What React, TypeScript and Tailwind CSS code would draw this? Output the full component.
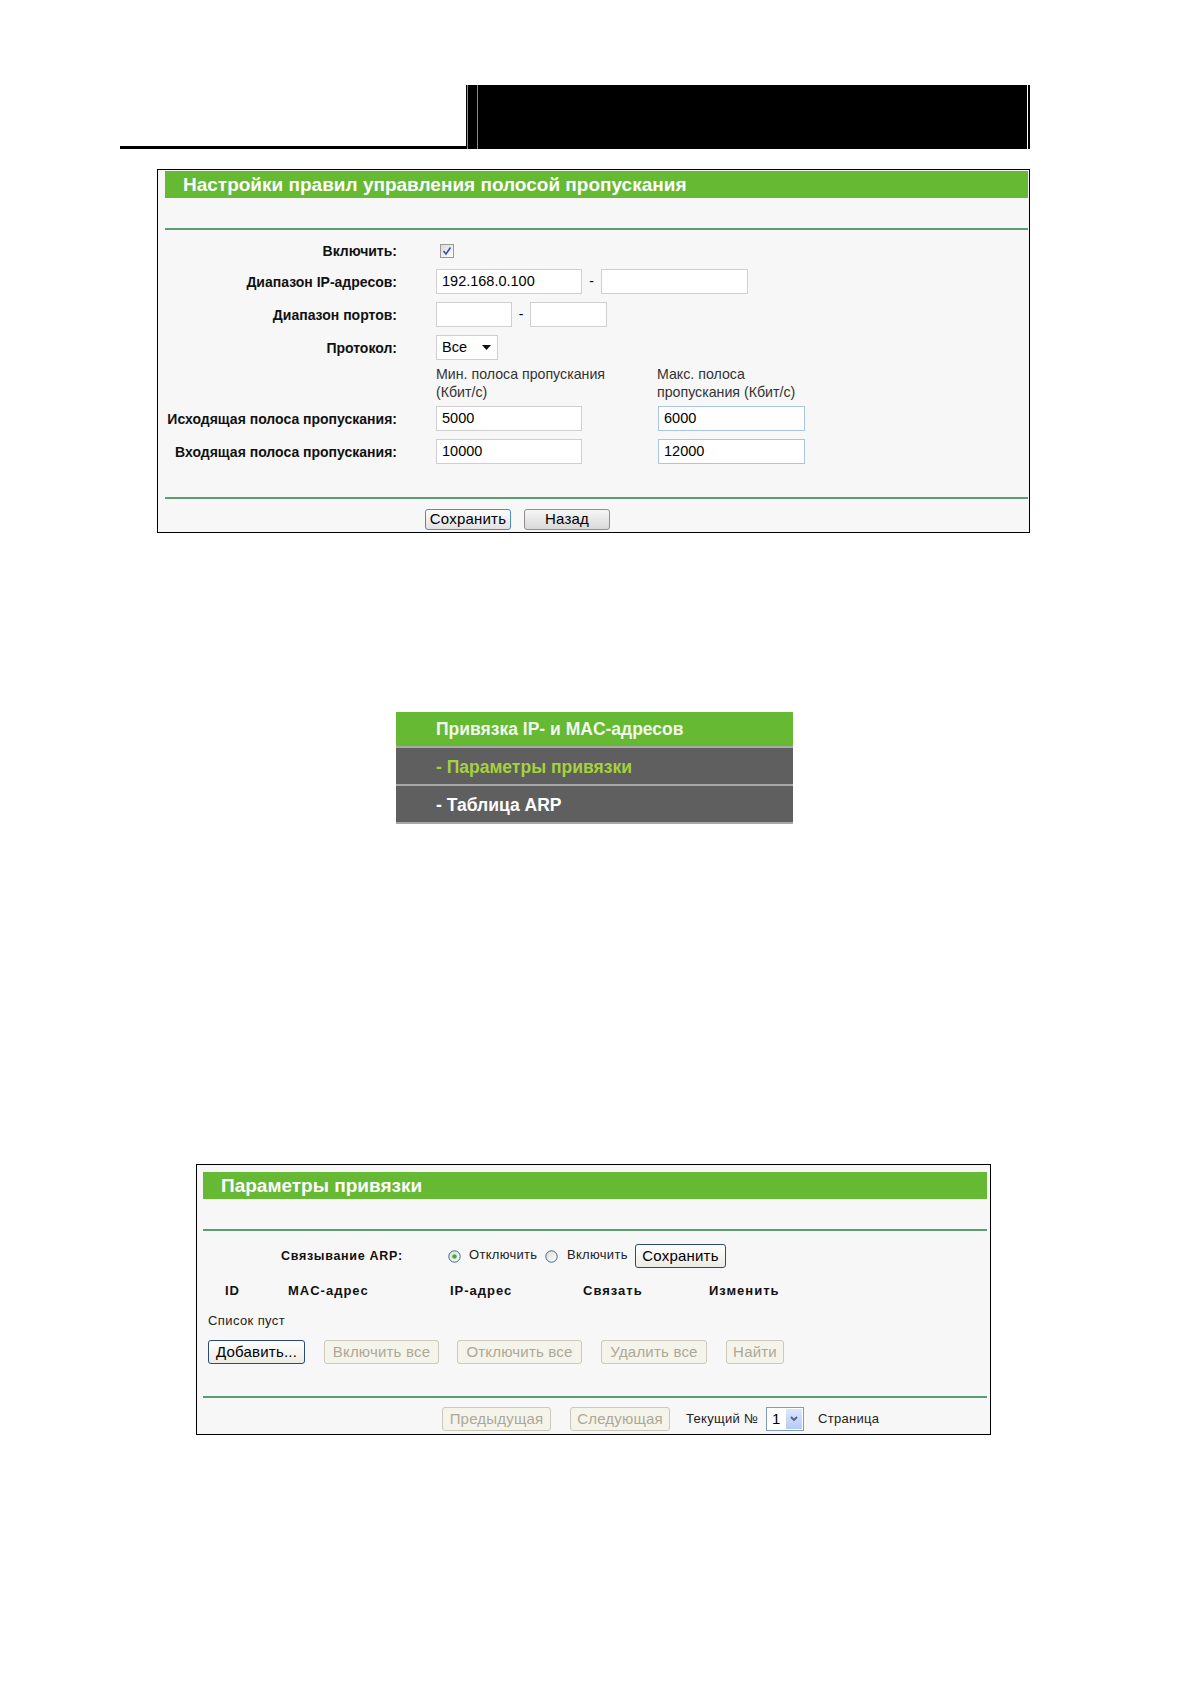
import React from "react";

const F = "font-['Liberation_Sans',Arial,sans-serif]";

function Label({ children }: { children: React.ReactNode }) {
  return (
    <div className="w-[232px] shrink-0 text-right font-bold text-[14px] leading-[20px] text-[#111]">
      {children}
    </div>
  );
}

function TextBox({
  w,
  value,
  blue,
}: {
  w: string;
  value?: string;
  blue?: boolean;
}) {
  return (
    <div
      className={
        "h-[25px] bg-white border pl-[5px] text-[14.5px] leading-[23px] text-black " +
        w +
        (blue ? " border-[#a9c6e6]" : " border-[#cfcfcf]")
      }
    >
      {value}
    </div>
  );
}

function Checkbox() {
  return (
    <svg width="14" height="14" viewBox="0 0 14 14">
      <defs>
        <linearGradient id="cbg" x1="0" y1="0" x2="1" y2="1">
          <stop offset="0" stopColor="#d8d8d8" />
          <stop offset="1" stopColor="#ffffff" />
        </linearGradient>
      </defs>
      <rect x="0.5" y="0.5" width="13" height="13" fill="url(#cbg)" stroke="#9a9a9a" />
      <path d="M3.5 7 L6 10 L10.5 3.5" fill="none" stroke="#3a4fa8" strokeWidth="1.6" />
    </svg>
  );
}

function Radio({ checked }: { checked?: boolean }) {
  return (
    <svg width="13" height="13" viewBox="0 0 13 13">
      <defs>
        <linearGradient id="rbg" x1="0" y1="0" x2="1" y2="1">
          <stop offset="0" stopColor="#dcdcd4" />
          <stop offset="1" stopColor="#ffffff" />
        </linearGradient>
      </defs>
      <circle cx="6.5" cy="6.5" r="5.7" fill="url(#rbg)" stroke="#3b6a95" strokeWidth="1" />
      {checked && <circle cx="6.5" cy="6.5" r="2.3" fill="#3fae3f" />}
    </svg>
  );
}

function XPButton({
  children,
  w,
  kind,
}: {
  children: React.ReactNode;
  w: string;
  kind: "blue" | "gray" | "dark" | "disabled";
}) {
  const styles: Record<string, string> = {
    blue: "border-[#4b8ac6] bg-linear-to-b from-[#fdfdfd] to-[#e2e2e2] text-black",
    gray: "border-[#8f8f8f] bg-linear-to-b from-[#f6f6f6] to-[#d9d9d9] text-black",
    dark: "border-[#2a4a78] bg-linear-to-b from-[#ffffff] to-[#ecebe4] text-black",
    disabled: "border-[#cbc9bc] bg-[#f5f4ea] text-[#aca899]",
  };
  return (
    <div
      className={
        "h-full flex items-center justify-center rounded-[3px] border text-[15px] tracking-[0.2px] " +
        w +
        " " +
        styles[kind]
      }
    >
      {children}
    </div>
  );
}

export default function App() {
  return (
    <div className={"w-[1190px] min-h-[1684px] bg-white text-black overflow-hidden " + F}>
      {/* top header */}
      <div className="pt-[85px] pl-[120px] flex items-end">
        <div className="w-[346px] h-[3px] bg-black" />
        <div className="w-[564px] h-[64px] bg-black flex">
          <div className="w-[1px]" />
          <div className="w-[1px] bg-[#8a8a8a]" />
          <div className="w-[9px]" />
          <div className="w-[1px] bg-[#8a8a8a]" />
          <div className="flex-1" />
          <div className="w-[1px] bg-white" />
          <div className="w-[2px]" />
        </div>
      </div>

      {/* Box 1 */}
      <div className="mt-[20px] ml-[157px] w-[873px] border border-black bg-[#f7f7f7] pt-[1px] pl-[7px] pr-[1px] pb-[2px]">
        <div className="h-[27px] bg-[#66b933] pl-[18px] text-white font-bold text-[19px] leading-[27px]">
          Настройки правил управления полосой пропускания
        </div>
        <div className="mt-[30px] h-[2px] bg-[#5a9e73]" />

        <div className="mt-[11px] h-[20px] flex items-center">
          <Label>Включить:</Label>
          <div className="ml-[43px] flex items-center">
            <Checkbox />
          </div>
        </div>

        <div className="mt-[8px] h-[25px] flex items-center">
          <Label>Диапазон IP-адресов:</Label>
          <div className="ml-[39px] flex items-center">
            <TextBox w="w-[146px]" value="192.168.0.100" />
            <span className="w-[19px] text-center text-[14px]">-</span>
            <TextBox w="w-[147px]" />
          </div>
        </div>

        <div className="mt-[8px] h-[25px] flex items-center">
          <Label>Диапазон портов:</Label>
          <div className="ml-[39px] flex items-center">
            <TextBox w="w-[76px]" />
            <span className="w-[18px] text-center text-[14px]">-</span>
            <TextBox w="w-[77px]" />
          </div>
        </div>

        <div className="mt-[8px] h-[25px] flex items-center">
          <Label>Протокол:</Label>
          <div className="ml-[39px] w-[62px] h-[25px] bg-white border border-[#cfcfcf] flex items-center justify-between pl-[5px] pr-[6px] text-[14.5px]">
            <span>Все</span>
            <svg width="9" height="5" viewBox="0 0 9 5">
              <path d="M0 0 H9 L4.5 5 Z" fill="#111" />
            </svg>
          </div>
        </div>

        <div className="mt-[5px] flex pl-[271px] text-[14.2px] leading-[18px] text-[#333]">
          <div className="w-[221px]">
            Мин. полоса пропускания
            <br />
            (Кбит/с)
          </div>
          <div>
            Макс. полоса
            <br />
            пропускания (Кбит/с)
          </div>
        </div>

        <div className="mt-[5px] h-[25px] flex items-center">
          <Label>Исходящая полоса пропускания:</Label>
          <div className="ml-[39px] flex items-center">
            <TextBox w="w-[146px]" value="5000" />
            <div className="w-[76px]" />
            <TextBox w="w-[147px]" value="6000" blue />
          </div>
        </div>

        <div className="mt-[8px] h-[25px] flex items-center">
          <Label>Входящая полоса пропускания:</Label>
          <div className="ml-[39px] flex items-center">
            <TextBox w="w-[146px]" value="10000" />
            <div className="w-[76px]" />
            <TextBox w="w-[147px]" value="12000" blue />
          </div>
        </div>

        <div className="mt-[33px] h-[2px] bg-[#5a9e73]" />

        <div className="mt-[10px] h-[21px] flex pl-[260px]">
          <XPButton w="w-[86px]" kind="blue">
            Сохранить
          </XPButton>
          <div className="w-[13px]" />
          <XPButton w="w-[86px]" kind="gray">
            Назад
          </XPButton>
        </div>
      </div>

      {/* Menu */}
      <div className="mt-[179px] ml-[396px] w-[397px] font-bold text-[17.5px]">
        <div className="h-[34px] bg-[#66b933] pl-[40px] pt-[1px] flex items-center text-[#f2f7ec]">
          Привязка IP- и MAC-адресов
        </div>
        <div className="h-[2px] bg-[#a8a8a8]" />
        <div className="h-[36px] bg-[#5f5f5f] pl-[40px] pt-[2px] flex items-center text-[#a4d23c]">
          - Параметры привязки
        </div>
        <div className="h-[2px] bg-[#a8a8a8]" />
        <div className="h-[36px] bg-[#5f5f5f] pl-[40px] pt-[2px] flex items-center text-white">
          - Таблица ARP
        </div>
        <div className="h-[2px] bg-[#a8a8a8]" />
      </div>

      {/* Box 2 */}
      <div className="mt-[340px] ml-[196px] w-[795px] border border-black bg-[#f7f7f7] pt-[7px] pl-[6px] pr-[3px] pb-[3px]">
        <div className="h-[27px] bg-[#66b933] pl-[18px] text-white font-bold text-[19px] leading-[27px]">
          Параметры привязки
        </div>
        <div className="mt-[30px] h-[2px] bg-[#5a9e73]" />

        <div className="mt-[13px] h-[24px] flex items-center">
          <div className="ml-[78px] w-[167px] font-bold text-[12.5px] tracking-[0.7px] text-[#111]">
            Связывание ARP:
          </div>
          <Radio checked />
          <span className="ml-[8px] w-[76px] text-[13px] tracking-[0.3px] text-[#222] -mt-[3px]">
            Отключить
          </span>
          <Radio />
          <span className="ml-[9px] w-[68px] text-[13px] tracking-[0.3px] text-[#222] -mt-[3px]">
            Включить
          </span>
          <XPButton w="w-[91px]" kind="dark">
            Сохранить
          </XPButton>
        </div>

        <div className="mt-[14px] h-[18px] flex items-center font-bold text-[13px] tracking-[1px] text-[#111]">
          <span className="ml-[22px] w-[63px]">ID</span>
          <span className="w-[162px]">MAC-адрес</span>
          <span className="w-[133px]">IP-адрес</span>
          <span className="w-[126px]">Связать</span>
          <span>Изменить</span>
        </div>

        <div className="mt-[12px] h-[18px] flex items-center pl-[5px] text-[13px] tracking-[0.4px] text-[#222]">
          Список пуст
        </div>

        <div className="mt-[10px] h-[24px] flex pl-[5px]">
          <XPButton w="w-[97px]" kind="dark">
            Добавить...
          </XPButton>
          <div className="w-[19px]" />
          <XPButton w="w-[115px]" kind="disabled">
            Включить все
          </XPButton>
          <div className="w-[18px]" />
          <XPButton w="w-[125px]" kind="disabled">
            Отключить все
          </XPButton>
          <div className="w-[19px]" />
          <XPButton w="w-[106px]" kind="disabled">
            Удалить все
          </XPButton>
          <div className="w-[19px]" />
          <XPButton w="w-[58px]" kind="disabled">
            Найти
          </XPButton>
        </div>

        <div className="mt-[32px] h-[2px] bg-[#5a9e73]" />

        <div className="mt-[9px] h-[24px] flex items-center pl-[239px]">
          <XPButton w="w-[109px]" kind="disabled">
            Предыдущая
          </XPButton>
          <div className="w-[19px]" />
          <XPButton w="w-[100px]" kind="disabled">
            Следующая
          </XPButton>
          <span className="ml-[16px] w-[80px] text-[13px] tracking-[0.3px] text-[#222]">
            Текущий №
          </span>
          <div className="w-[38px] h-[24px] bg-white border border-[#7f9db9] flex items-stretch">
            <div className="flex-1 pl-[5px] text-[15px] leading-[22px]">1</div>
            <div className="w-[16px] m-[1px] bg-linear-to-b from-[#dbe6fd] to-[#b5cbf6] flex items-center justify-center">
              <svg width="8" height="6" viewBox="0 0 8 6">
                <path d="M1 1 L4 4 L7 1" fill="none" stroke="#4d6185" strokeWidth="1.8" />
              </svg>
            </div>
          </div>
          <span className="ml-[14px] text-[13px] tracking-[0.3px] text-[#222]">Страница</span>
        </div>
      </div>
    </div>
  );
}
